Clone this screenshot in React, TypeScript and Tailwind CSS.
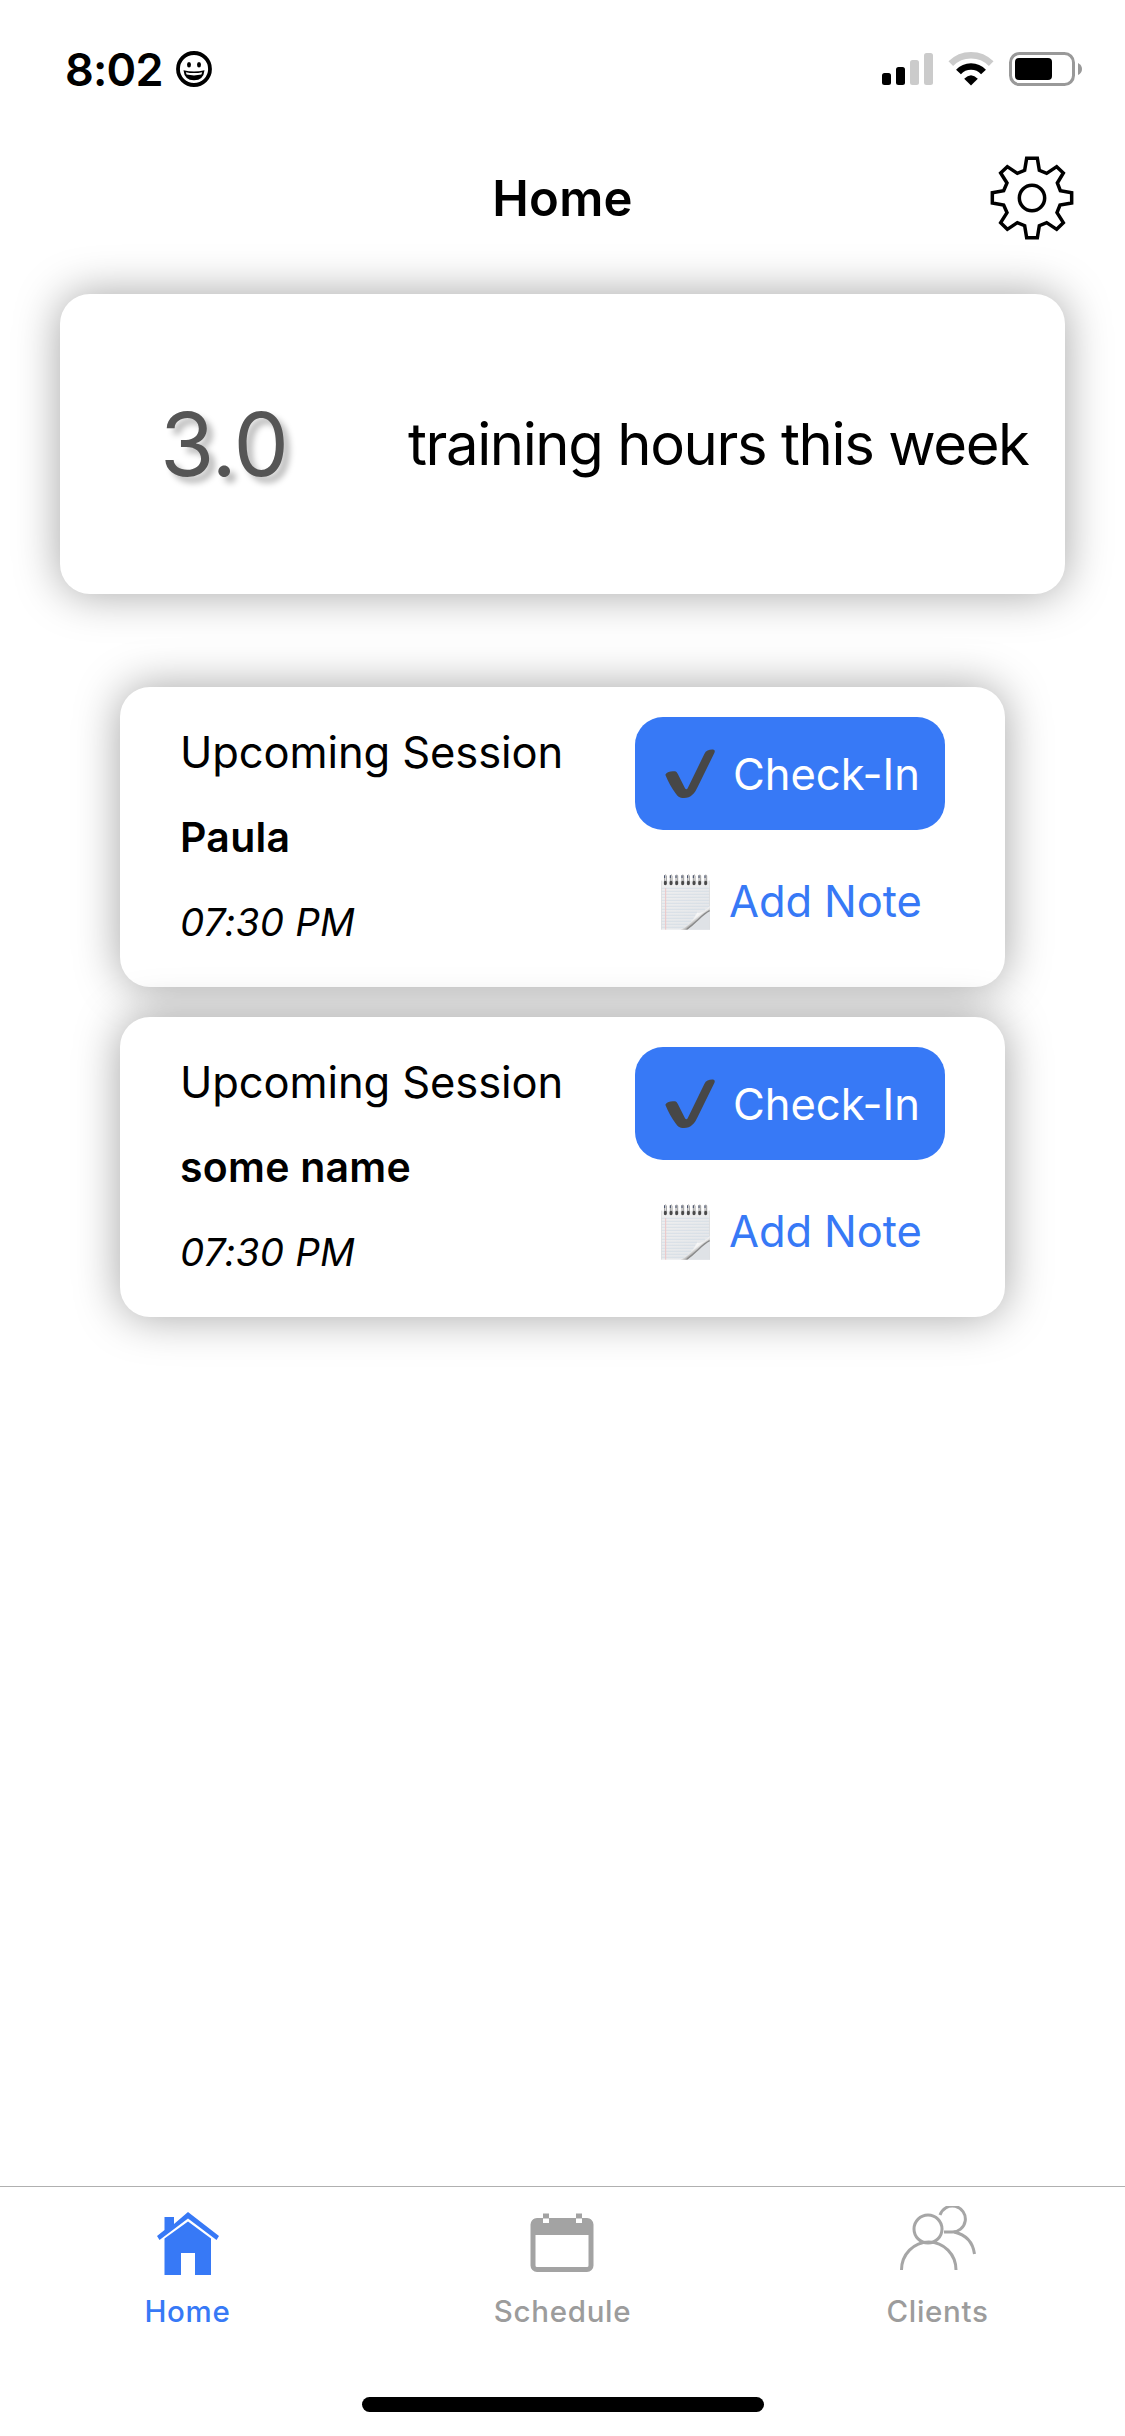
import React from 'react';

interface Session {
  id: number;
  name: string;
  time: string;
}

const sessions: Session[] = [
  { id: 1, name: 'Paula', time: '07:30 PM' },
  { id: 2, name: 'some name', time: '07:30 PM' },
];

const StatusBar: React.FC = () => (
  <div className="flex h-[138px] items-center pl-[65px] pr-[43px]">
    <span className="w-[111px] whitespace-nowrap text-[45px] font-semibold leading-none tracking-[-0.8px]">8:02</span>
    <svg className="h-9 w-9" viewBox="0 0 36 36">
      <circle cx="18" cy="18" r="16" fill="none" stroke="#000" strokeWidth="3.8" />
      <ellipse cx="13" cy="13.8" rx="2" ry="2.7" />
      <ellipse cx="23" cy="13.8" rx="2" ry="2.7" />
      <path d="M7.5 19.2Q18 21.6 28.5 19.2Q27.6 29.2 18 29.2Q8.4 29.2 7.5 19.2Z" />
      <path d="M9.8 21.2Q18 23 26.2 21.2L25.4 23.6Q18 25.2 10.6 23.6Z" fill="#fff" />
    </svg>

    <div className="ml-auto flex items-center">
      {/* Signal */}
      <svg className="h-[34px] w-[52px]" viewBox="0 0 52 34">
        <rect x="0" y="21" width="9" height="12" rx="2.5" />
        <rect x="14" y="15" width="9" height="18" rx="2.5" />
        <rect x="28" y="8" width="9" height="25" rx="2.5" fill="#cbcbcb" />
        <rect x="42" y="1" width="9" height="32" rx="2.5" fill="#cbcbcb" />
      </svg>
      {/* Wi-Fi */}
      <svg className="ml-[14px] h-[34px] w-[46px]" viewBox="0 0 46 34" fill="none">
        <path d="M2.8 11.7A28.5 28.5 0 0 1 43.2 11.7" stroke="#cbcbcb" strokeWidth="6.6" />
        <path d="M10.5 20A17 17 0 0 1 35.5 20" stroke="#000" strokeWidth="6.6" />
        <path d="M16.2 26.8Q23 19.6 29.8 26.8L23 33.4Z" fill="#000" />
      </svg>
      {/* Battery */}
      <svg className="ml-[15px] h-[34px] w-[73px]" viewBox="0 0 73 34">
        <rect x="1.5" y="1.5" width="63" height="31" rx="9" fill="none" stroke="#999" strokeWidth="3" />
        <rect x="6" y="6" width="37" height="22" rx="4" />
        <path d="M69 11Q73 13 73 17T69 23Z" fill="#999" />
      </svg>
    </div>
  </div>
);

const GearIcon: React.FC = () => (
  <svg className="h-[84px] w-[84px]" viewBox="60 48 252 252" fill="none" stroke="#000" strokeWidth="10.5">
    <path d="M170 55H202L208 91L230 100L260 80L280 99L262 129L271 152L305 158V189L270 195L261 218L280 248L260 268L230 248L208 257L202 293H170L164 257L142 248L112 268L92 248L111 218L101 195L67 189V158L101 152L111 129L92 99L112 80L142 100L164 91Z" />
    <circle cx="186" cy="174" r="38" />
  </svg>
);

const CheckIcon: React.FC = () => (
  <svg className="h-[50px] w-[50px]" viewBox="0 0 150 150">
    <path
      d="M1 77C6 68 18 66 29 67C34 67 37 72 40 78L60 118C62 122 66 122 68 118L118 15C123 4 134 1 146 2C150 3 150 7 148 12L99 112C89 134 78 147 57 147C43 147 37 141 31 132C20 116 10 99 1 77Z"
      fill="#474747"
    />
  </svg>
);

const NoteIcon: React.FC = () => (
  <svg className="h-14 w-[49px]" viewBox="0 0 147 168">
    <defs>
      <linearGradient id="paper" x1="0" y1="0" x2="1" y2="1">
        <stop offset="0" stopColor="#f0f0f0" />
        <stop offset="1" stopColor="#e2e5e9" />
      </linearGradient>
      <linearGradient id="curl" gradientUnits="userSpaceOnUse" x1="94" y1="122" x2="112" y2="146">
        <stop offset="0" stopColor="#ffffff" />
        <stop offset="0.45" stopColor="#f2f2f2" />
        <stop offset="0.75" stopColor="#b0b0b0" />
        <stop offset="1" stopColor="#6e6e6e" />
      </linearGradient>
    </defs>
    <rect x="1" y="20" width="145" height="147" fill="url(#paper)" />
    <path d="M1 20V167M146 20V167" stroke="#d0d0d0" strokeWidth="2" />
    <path
      d="M2 43H145M2 52H145M2 61H145M2 70H145M2 79H145M2 88H145M2 97H145M2 106H132M2 115H108M2 124H102M2 133H98M2 142H90M2 151H80M2 160H70"
      stroke="#cfd9e4"
      strokeWidth="2"
    />
    <path d="M14 42V167" stroke="#eec5c5" strokeWidth="3" />
    <path d="M146 112C124 122 110 148 78 167H146Z" fill="#dfe2e6" />
    <path d="M146 96C136 110 122 119 108 117C98 136 84 158 56 167H78C98 156 106 132 146 109Z" fill="url(#curl)" />
    <path d="M146 110C122 122 110 142 78 165" stroke="#8a8a8a" strokeWidth="4" fill="none" />
    {[13, 30, 47, 65, 82, 99, 116, 134].map((x) => (
      <g key={x}>
        <path d={`M${x - 2} 33V5Q${x} 0 ${x + 3} 5V31`} stroke="#9b9b9b" strokeWidth="3" fill="none" />
        <path d={`M${x - 2} 4V12`} stroke="#3b4664" strokeWidth="3" />
        <ellipse cx={x} cy="27" rx="4.5" ry="7" fill="#494949" />
      </g>
    ))}
  </svg>
);

const SessionCard: React.FC<{ session: Session }> = ({ session }) => (
  <div className="flex h-[300px] w-[885px] justify-between rounded-[30px] bg-white pl-[60px] pr-[60px] shadow-[0_0_45px_rgba(0,0,0,0.36)]">
    <div className="flex flex-col justify-center whitespace-nowrap leading-[85px]">
      <p className="text-[43.5px] tracking-[-0.1px]">Upcoming Session</p>
      <p className="text-[41px] font-semibold tracking-[0.25px]">{session.name}</p>
      <p className="text-[38.5px] italic tracking-[0.2px]">{session.time}</p>
    </div>
    <div className="flex w-[310px] flex-col gap-[15px] pt-[30px] text-[43.5px] leading-none">
      <button className="flex h-[113px] items-center whitespace-nowrap rounded-[28px] bg-[#3779f6] pl-[30px] text-white">
        <CheckIcon />
        <span className="ml-[18px] pt-0.5">Check-In</span>
      </button>
      <button className="flex h-[113px] items-center whitespace-nowrap pl-[26px] text-[#3779f6]">
        <NoteIcon />
        <span className="ml-[19px] tracking-[-0.1px]">Add Note</span>
      </button>
    </div>
  </div>
);

const HomeIcon: React.FC = () => (
  <svg className="h-[66px] w-[66px]" viewBox="0 0 66 66" fill="#3779f6">
    <path d="M9.5 7H19V14L33 2L64 26L61.5 30L33 8.5L4.5 30L2 26L9.5 20Z" />
    <path d="M33 11.5L56 28.5V65H40V43H26V65H9.5V28.5Z" />
  </svg>
);

const ScheduleIcon: React.FC = () => (
  <svg className="h-[66px] w-[66px]" viewBox="0.5 -1 66 66">
    <rect x="3.5" y="9.5" width="58" height="49" rx="4" fill="none" stroke="#a3a3a3" strokeWidth="5" />
    <path d="M4 8H61V24H4Z" fill="#a3a3a3" />
    <rect x="13.5" y="7" width="6" height="5" fill="#fff" />
    <rect x="46.5" y="7" width="6" height="5" fill="#fff" />
    <rect x="13.5" y="2.5" width="6" height="5" fill="#a3a3a3" />
    <rect x="46.5" y="2.5" width="6" height="5" fill="#a3a3a3" />
  </svg>
);

const ClientsIcon: React.FC = () => (
  <svg className="mb-1 h-[66px] w-[76px]" viewBox="0 0 76 66" fill="none" stroke="#a6a6a6" strokeWidth="3">
    <circle cx="28" cy="23" r="14" />
    <path d="M1.500 64A26.700 27.500 0 0 1 56 64" />
    <path d="M40 9A13 13 0 1 1 51.500 26H44" />
    <path d="M54 26Q72 30 74.500 48" />
  </svg>
);

const tabs = [
  { label: 'Home', icon: <HomeIcon />, color: 'text-[#3779f6]' },
  { label: 'Schedule', icon: <ScheduleIcon />, color: 'text-[#9c9c9c]' },
  { label: 'Clients', icon: <ClientsIcon />, color: 'text-[#9c9c9c]' },
];

const App: React.FC = () => {
  return (
    <div className="flex h-[2436px] w-[1125px] flex-col overflow-hidden bg-white font-['Inter',sans-serif] text-black">
      <StatusBar />

      <header className="grid h-[120px] grid-cols-3 items-center">
        <span />
        <h1 className="text-center text-[49px] font-semibold leading-none tracking-[0.2px]">Home</h1>
        <button className="justify-self-end pr-[51px]">
          <GearIcon />
        </button>
      </header>

      <main className="flex flex-1 flex-col items-center pt-9">
        {/* Weekly summary */}
        <section className="flex h-[300px] w-[1005px] items-center whitespace-nowrap rounded-[30px] bg-white pl-[100px] leading-none shadow-[0_0_45px_rgba(0,0,0,0.36)]">
          <span className="w-[248px] text-[88px] tracking-[-1px] text-[#555] [text-shadow:6px_6px_6px_rgba(0,0,0,0.27)]">3.0</span>
          <span className="text-[58px] tracking-[-1.4px]">training hours this week</span>
        </section>

        <section className="mt-[93px] flex flex-col gap-[30px]">
          {sessions.map((session) => (
            <SessionCard key={session.id} session={session} />
          ))}
        </section>
      </main>

      <nav className="flex h-[211px] border-t border-[#b0b0b0] pt-[17px]">
        {tabs.map((tab) => (
          <button key={tab.label} className={`flex flex-1 flex-col items-center justify-start ${tab.color}`}>
            <span className="flex h-[72px] items-end">{tab.icon}</span>
            <span className="mt-[21px] text-[29.5px] font-medium leading-none tracking-[0.7px]">{tab.label}</span>
          </button>
        ))}
      </nav>
      <div className="h-[39px]">
        <div className="mx-auto h-[15px] w-[402px] rounded-full bg-black" />
      </div>
    </div>
  );
};

export default App;
